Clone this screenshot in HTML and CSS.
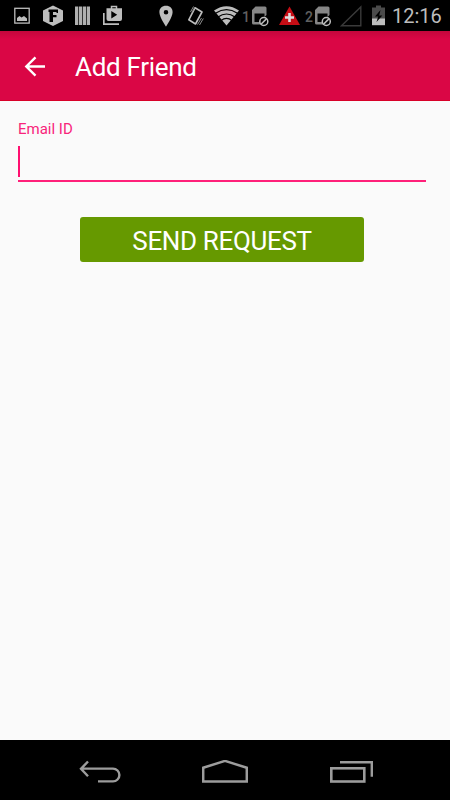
FILE: index.html
```html
<!DOCTYPE html>
<html lang="en">
<head>
    <meta charset="UTF-8">
    <meta name="viewport" content="width=device-width, initial-scale=1.0">
    <title>Add Friend</title>
    <link rel="stylesheet" href="styles.css">
</head>
<body>
    <div class="screen">
        <!-- Status bar -->
        <div class="status-bar">
            <div class="notifications">
                <svg width="16" height="22" viewBox="0 0 16 22">
                    <rect x="0.800" y="3.300" width="14.400" height="14.800" fill="none" stroke="#bdbdbd" stroke-width="1.300"/>
                    <path d="M3 16v-3l2.500-2 2 1.500 2.500-1.500 3 2.500V16z" fill="#bdbdbd"/>
                </svg>
                <svg width="20" height="22" viewBox="0 0 20 22">
                    <path d="M10 .5l10 5v10.500l-10 5-10-5V5.500z" fill="#bdbdbd"/>
                    <path d="M5.500 4.500H15V8h-1.500V7H10v3h3.500v2.300H10V17H6.500V7h-1z" fill="#000"/>
                </svg>
                <svg width="15" height="22" viewBox="0 0 15 22">
                    <path d="M0 1.500h3.300v18.500H0zM4 1.500h3.300v18.500H4zM8 1.500h3.300v18.500H8zM12 1.500h3v18.500h-3z" fill="#b0b0b0"/>
                </svg>
                <svg width="20" height="22" viewBox="0 0 20 22">
                    <path d="M.8 8v11.200h15.200" fill="none" stroke="#bdbdbd" stroke-width="1.700"/>
                    <path d="M8.500 4V1.500h5V4" fill="none" stroke="#bdbdbd" stroke-width="1.500"/>
                    <path fill-rule="evenodd" d="M3.500 3.300h15.500v10.700q0 2-2 2H5.500q-2 0-2-2zM8.300 6v7.500l5.900-3.800z" fill="#bdbdbd"/>
                </svg>
            </div>
            <div class="system-icons">
                <svg class="icon-pin" width="14" height="22" viewBox="0 0 14 22">
                    <path fill-rule="evenodd" d="M7 .8C3 .8.400 3.500.400 7.200.400 12 7 21.500 7 21.500s6.600-9.500 6.600-14.300C13.600 3.500 11 .8 7 .8zM7 5a2.300 2.300 0 1 0 0 4.600A2.300 2.300 0 0 0 7 5z" fill="#bdbdbd"/>
                </svg>
                <svg class="icon-vibrate" width="18" height="22" viewBox="0 0 18 22" fill="none" stroke="#bdbdbd">
                    <path d="M8 2.800l7 4.200-6.500 12L1.800 14.800z" stroke-width="1.600" stroke-linejoin="round"/>
                    <path d="M3.500 7l3-5.500M5 7.500l3-5.500M10.500 19.500l4-6.500M12.500 20l3.800-6.500" stroke="#8c8c8c" stroke-width="1"/>
                </svg>
                <svg class="icon-wifi" width="25" height="22" viewBox="0 0 25 22">
                    <path d="M0 5.500Q12.500-3 25 5.500L12.500 20.500z" fill="#bdbdbd"/>
                    <path d="M1.500 8.200Q12.500 1 23.500 8.200M4 12Q12.500 6 21 12M7 15.600Q12.500 11.200 18 15.600" fill="none" stroke="#000" stroke-width="1.200"/>
                </svg>
                <span class="sim-number sim-one">1</span>
                <svg class="icon-sim" width="17" height="22" viewBox="0 0 17 22">
                    <path fill-rule="evenodd" d="M0 5l3.500-3.500H13q1.500 0 1.500 1.500v7l-3 3-3 6.500H1.500Q0 19.500 0 18zM2.500 8.500h10V17h-10z" fill="#868686"/>
                    <circle cx="11.800" cy="16.500" r="4" fill="#000" stroke="#bdbdbd" stroke-width="1.500"/>
                    <path d="M9 19.200l5.600-5.600" stroke="#bdbdbd" stroke-width="1.500"/>
                </svg>
                <svg class="icon-alert" width="21" height="22" viewBox="0 0 21 22">
                    <path d="M10.500 1.500L21 20H0z" fill="#c60d15"/>
                    <path d="M10.500 8v9M6 12.500h9" stroke="#ddd" stroke-width="2.600"/>
                </svg>
                <span class="sim-number sim-two">2</span>
                <svg class="icon-sim" width="17" height="22" viewBox="0 0 17 22">
                    <path fill-rule="evenodd" d="M0 5l3.500-3.500H13q1.500 0 1.500 1.500v7l-3 3-3 6.500H1.500Q0 19.500 0 18zM2.500 8.500h10V17h-10z" fill="#868686"/>
                    <circle cx="11.300" cy="16.500" r="4" fill="#000" stroke="#bdbdbd" stroke-width="1.500"/>
                    <path d="M8.500 19.200l5.600-5.600" stroke="#bdbdbd" stroke-width="1.500"/>
                </svg>
                <svg class="icon-signal" width="22" height="22" viewBox="0 0 22 22">
                    <path d="M1.500 20.700H20.800V2z" fill="none" stroke="#3a3a3a" stroke-width="1.400"/>
                </svg>
                <svg class="icon-battery" width="13" height="22" viewBox="0 0 13 22">
                    <path d="M4 .5h5v2h4V14H0V2.500h4z" fill="#4b4b4b"/>
                    <path d="M0 13.500h13v6.700H0z" fill="#bdbdbd"/>
                    <path d="M8.500 5L3 11.500h3.200L4.500 17l5.800-6.500H7.200z" fill="#000"/>
                </svg>
                <span class="clock">12:16</span>
            </div>
        </div>

        <!-- App bar -->
        <header class="app-bar">
            <svg class="back-arrow" width="22" height="22" viewBox="0 0 22 22">
                <path d="M21 10.500H2.500M11.500 1.300L2.300 10.500l9.200 9.200" fill="none" stroke="#fff" stroke-width="2.400"/>
            </svg>
            <h1>Add Friend</h1>
        </header>

        <main class="content">
            <form class="friend-form">
                <label for="email">Email ID</label>
                <div class="email-field" id="email"><span class="cursor"></span></div>
                <button type="button">SEND REQUEST</button>
            </form>
        </main>

        <!-- Navigation bar -->
        <nav class="nav-bar">
            <svg width="44" height="26" viewBox="0 0 44 26" fill="none" stroke="#9c9c9c" stroke-width="2.400">
                <path d="M10 1.500L3 8.800l7 7.400M3 8.600h32a6.400 6.400 0 0 1 0 12.800H20"/>
            </svg>
            <svg width="46" height="26" viewBox="0 0 46 26" fill="none" stroke="#9c9c9c" stroke-width="2.500">
                <path d="M1.200 21.500V7.800L23 .9l21.800 6.900v13.700z"/>
            </svg>
            <svg width="44" height="26" viewBox="0 0 44 26" fill="none" stroke="#9c9c9c">
                <rect x="1.300" y="8.300" width="33" height="13.200" stroke-width="2.600"/>
                <path d="M10 2.200h31.800v14.600" stroke-width="2.400"/>
            </svg>
        </nav>
    </div>
</body>
</html>
```
FILE: styles.css
```css
body {
    margin: 0;
    font-family: Roboto, "Noto Sans", sans-serif;
}
.screen {
    width: 450px;
    height: 800px;
    display: flex;
    flex-direction: column;
    background-color: #fafafa;
}

/* Status bar */
.status-bar {
    height: 31px;
    box-sizing: border-box;
    padding: 0 7px 0 14px;
    display: flex;
    align-items: center;
    justify-content: space-between;
    background-color: #000;
}
.status-bar svg {
    display: block;
    flex: none;
}
.notifications,
.system-icons {
    display: flex;
    align-items: center;
}
.notifications {
    gap: 12.500px;
}
.icon-vibrate {
    margin-left: 14px;
}
.icon-wifi {
    margin-left: 9px;
}
.sim-number {
    font-size: 14px;
    font-weight: 500;
    line-height: 22px;
    padding-top: 3px;
    color: #606060;
}
.sim-one {
    width: 10px;
    margin-left: 3px;
}
.icon-alert {
    margin-left: 10px;
}
.sim-two {
    width: 10px;
    margin-left: 5px;
}
.icon-signal {
    margin-left: 8px;
}
.icon-battery {
    margin-left: 10px;
}
.clock {
    width: 51px;
    margin-left: 7px;
    font-size: 20px;
    line-height: 22px;
    white-space: nowrap;
    color: #bdbdbd;
}

/* App bar */
.app-bar {
    height: 70px;
    box-sizing: border-box;
    padding: 3px 24px 0;
    display: flex;
    align-items: center;
    background: linear-gradient(#c4063c, #da0645 8px);
    border-bottom: 1px solid #d80028;
}
.app-bar h1 {
    margin: 0 0 0 29px;
    font-size: 26px;
    font-weight: 400;
    line-height: 32px;
    letter-spacing: -0.3px;
    color: #fff;
}

/* Form */
.content {
    flex: 1;
    padding: 19px 24px 0 18px;
}
.friend-form {
    display: flex;
    flex-direction: column;
}
.friend-form label {
    font-size: 15px;
    line-height: 18px;
    color: #f8247a;
}
.email-field {
    height: 36px;
    box-sizing: border-box;
    margin-top: 8px;
    border-bottom: 2px solid #ff2079;
}
.cursor {
    display: block;
    width: 2px;
    height: 31px;
    background-color: #ff1070;
}
.friend-form button {
    width: 284px;
    height: 45px;
    margin: 35px 0 0 62px;
    padding: 2px 0 0;
    border: none;
    border-radius: 3px;
    background-color: #669900;
    font-family: inherit;
    font-size: 26px;
    letter-spacing: -0.35px;
    color: #fff;
}

/* Navigation bar */
.nav-bar {
    height: 60px;
    box-sizing: border-box;
    padding: 5px 76px 0 78px;
    display: flex;
    align-items: center;
    justify-content: space-between;
    background-color: #000;
}
.nav-bar svg:nth-child(2) {
    margin-right: 2px;
}
```
